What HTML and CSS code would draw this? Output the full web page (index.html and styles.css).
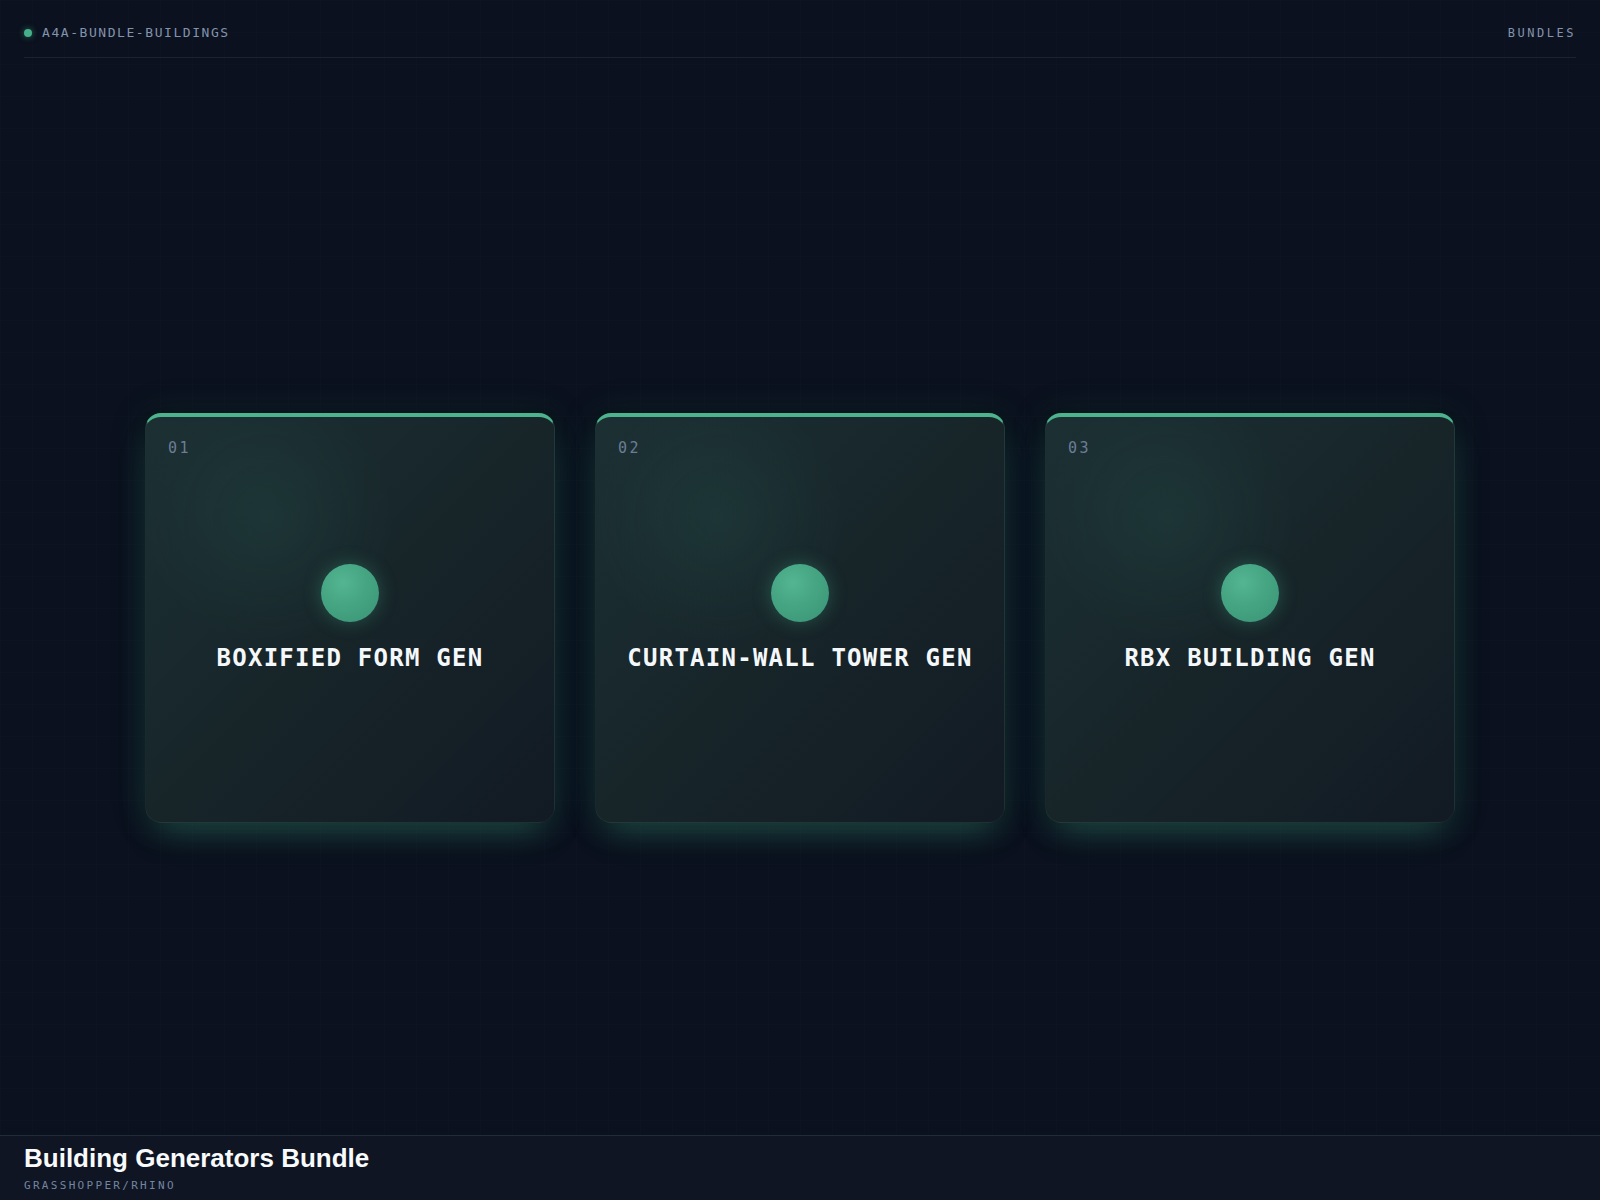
FILE: index.html
```html
<!DOCTYPE html>
<html lang="en">
<head>
    <meta charset="UTF-8">
    <meta name="viewport" content="width=device-width, initial-scale=1.0">
    <title>Building Generators Bundle</title>
    <link rel="stylesheet" href="styles.css">
</head>
<body>
    <header class="topbar">
        <div class="topbar-inner">
            <div class="brand">
                <span class="brand-dot"></span>
                <span class="brand-name">A4A-BUNDLE-BUILDINGS</span>
            </div>
            <nav class="topbar-nav">BUNDLES</nav>
        </div>
    </header>

    <main class="stage">
        <div class="card-row">
            <div class="card">
                <span class="card-index">01</span>
                <div class="card-body">
                    <div class="orb"></div>
                    <h2 class="card-title">BOXIFIED FORM GEN</h2>
                </div>
            </div>
            <div class="card">
                <span class="card-index">02</span>
                <div class="card-body">
                    <div class="orb"></div>
                    <h2 class="card-title">CURTAIN-WALL TOWER GEN</h2>
                </div>
            </div>
            <div class="card">
                <span class="card-index">03</span>
                <div class="card-body">
                    <div class="orb"></div>
                    <h2 class="card-title">RBX BUILDING GEN</h2>
                </div>
            </div>
        </div>
    </main>

    <footer class="footer">
        <h1 class="footer-title">Building Generators Bundle</h1>
        <p class="footer-sub">GRASSHOPPER/RHINO</p>
    </footer>
</body>
</html>
```

FILE: styles.css
```css
* {
    margin: 0;
    padding: 0;
    box-sizing: border-box;
}

html, body {
    height: 100%;
}

body {
    font-family: 'DejaVu Sans Mono', 'Liberation Mono', monospace;
    background-color: #0b111e;
    background-image:
        linear-gradient(rgba(255, 255, 255, 0.008) 1px, transparent 1px),
        linear-gradient(90deg, rgba(255, 255, 255, 0.008) 1px, transparent 1px);
    background-size: 32px 32px;
    color: #e2e8f0;
    display: flex;
    flex-direction: column;
    min-height: 100vh;
    overflow: hidden;
}

/* top bar */
.topbar {
    padding: 0 24px;
}

.topbar-inner {
    display: flex;
    align-items: center;
    justify-content: space-between;
    padding: 25px 0 16px;
    line-height: 16px;
    border-bottom: 1px solid #1b2331;
}

.brand {
    display: flex;
    align-items: center;
    gap: 10px;
}

.brand-dot {
    width: 8px;
    height: 8px;
    border-radius: 50%;
    background: #45b08a;
    box-shadow: 0 0 6px rgba(69, 176, 138, 0.6);
}

.brand-name {
    font-size: 13px;
    letter-spacing: 0.12em;
    color: #8393ad;
}

.topbar-nav {
    font-size: 12px;
    letter-spacing: 0.21em;
    color: #8393ad;
}

/* cards */
.stage {
    flex: 1;
    display: flex;
    align-items: center;
    justify-content: center;
    padding-top: 43px;
}

.card-row {
    display: flex;
    gap: 40px;
}

.card {
    position: relative;
    width: 410px;
    height: 410px;
    border-radius: 16px;
    border: 1px solid rgba(120, 200, 170, 0.07);
    border-top: 4px solid #4db38d;
    background:
        radial-gradient(circle at 30% 25%, rgba(60, 150, 125, 0.1), transparent 30%),
        linear-gradient(135deg, #1c3034 0%, #172529 50%, #121a24 100%);
    box-shadow:
        0 18px 34px -12px rgba(69, 176, 138, 0.35),
        0 0 36px rgba(40, 120, 100, 0.18),
        0 0 12px rgba(0, 0, 0, 0.4);
    display: flex;
}

.card-index {
    position: absolute;
    top: 23px;
    left: 22px;
    font-size: 15px;
    line-height: 1.164;
    letter-spacing: 0.16em;
    color: #6b7d96;
}

.card-body {
    flex: 1;
    display: flex;
    flex-direction: column;
    align-items: center;
    justify-content: center;
    gap: 22px;
    margin-top: -2px;
}

.orb {
    width: 58px;
    height: 58px;
    border-radius: 50%;
    background: radial-gradient(circle at 38% 32%, #54b592 0%, #45a583 45%, #3a9274 100%);
    box-shadow: 0 0 18px rgba(69, 176, 138, 0.35);
}

.card-title {
    font-size: 24px;
    line-height: 1.2;
    font-weight: bold;
    letter-spacing: 1.25px;
    color: #f5f8fb;
}

/* footer */
.footer {
    border-top: 1px solid #222b3a;
    background: #0f1523;
    padding: 7px 24px 7px;
    height: 65px;
}

.footer-title {
    font-family: 'Liberation Sans', Arial, sans-serif;
    font-size: 26px;
    line-height: 1.2;
    font-weight: bold;
    color: #f8fafc;
}

.footer-sub {
    margin-top: 5px;
    font-size: 11px;
    line-height: 1.2;
    letter-spacing: 0.21em;
    color: #7485a0;
}
```
